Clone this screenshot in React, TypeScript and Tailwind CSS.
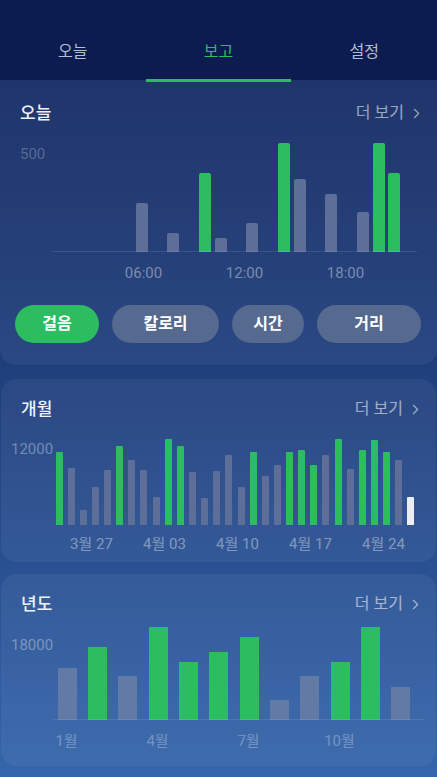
import { ChevronRight } from "lucide-react"

const font = { fontFamily: "Roboto, 'Noto Sans CJK KR', sans-serif" }

const GREEN = "bg-[#2bbd5f]"
const GRAY = "bg-[#5d6f98]"

// hour -> [height, green]
const today: Record<number, [number, boolean]> = {
    6: [49, false],
    8: [19, false],
    10: [79, true],
    11: [14, false],
    13: [29, false],
    15: [109, true],
    16: [73, false],
    18: [58, false],
    20: [40, false],
    21: [109, true],
    22: [79, true],
}

const month: [number, "g" | "x" | "w"][] = [
    [73, "g"], [57, "x"], [15, "x"], [38, "x"], [55, "x"], [79, "g"], [65, "x"], [55, "x"], [28, "x"], [86, "g"],
    [79, "g"], [53, "x"], [27, "x"], [54, "x"], [70, "x"], [38, "x"], [73, "g"], [49, "x"], [60, "x"], [73, "g"],
    [75, "g"], [60, "g"], [70, "x"], [86, "g"], [56, "x"], [75, "g"], [85, "g"], [73, "g"], [65, "x"], [28, "w"],
]

const year: [number, boolean][] = [
    [52, false], [73, true], [44, false], [93, true], [58, true], [68, true],
    [83, true], [20, false], [44, false], [58, true], [93, true], [33, false],
]

function CardHeader({ title }: { title: string }) {
    return (
        <div className="flex items-center justify-between pl-5 pr-3">
            <p className="text-[17px] leading-6 font-medium text-[#eef1f8]">{title}</p>
            <button className="flex items-center gap-1 text-[16px] leading-6 text-white/55">
                더 보기
                <ChevronRight size={17} strokeWidth={1.6} />
            </button>
        </div>
    )
}

export default function App() {
    return (
        <div style={font} className="w-full min-h-[777px] bg-linear-to-b from-[#10245c] via-[#20407e] to-[#3565ab] pb-3">
            {/* tabs */}
            <div className="h-20 bg-[#0c1c50] pt-10 grid grid-cols-3">
                {["오늘", "보고", "설정"].map((t, i) => (
                    <div key={t} className="relative h-10 text-center">
                        <p className={`text-[16px] leading-6 ${i === 1 ? "text-[#2bbd5f]" : "text-[#b6bed1]"}`}>{t}</p>
                        {i === 1 && <div className="absolute left-0 right-0 -bottom-[2px] h-[3px] bg-[#2bbd5f]" />}
                    </div>
                ))}
            </div>

            {/* today */}
            <div className="bg-white/[0.05] rounded-b-2xl pt-[21px] pb-[22px]">
                <CardHeader title="오늘" />
                <div className="relative mt-[18px] h-[109px]">
                    <span className="absolute left-5 top-[3px] text-[15px] leading-4 text-white/25">500</span>
                    <div className="absolute left-[53px] right-5 bottom-0 h-px bg-white/10" />
                    <div className="ml-[39px] w-[379px] h-full grid grid-cols-24 items-end">
                        {Array.from({ length: 24 }).map((_, h) => (
                            <div key={h} className="flex justify-center">
                                {today[h] && (
                                    <div
                                        className={`w-3 rounded-t-[2px] ${today[h][1] ? GREEN : GRAY}`}
                                        style={{ height: today[h][0] }}
                                    />
                                )}
                            </div>
                        ))}
                    </div>
                </div>
                <div className="mt-[13px] ml-[93px] flex text-[15px] leading-4 text-white/40">
                    {["06:00", "12:00", "18:00"].map(l => (
                        <span key={l} className="w-[101px] text-center">{l}</span>
                    ))}
                </div>
                <div className="mt-6 px-[15px] flex gap-[13px] text-[16px] font-bold text-white">
                    <button className="w-[84px] h-[38px] rounded-full bg-[#2bbd5f]">걸음</button>
                    <button className="w-[107px] h-[38px] rounded-full bg-[#56698f]">칼로리</button>
                    <button className="w-[72px] h-[38px] rounded-full bg-[#56698f]">시간</button>
                    <button className="w-[104px] h-[38px] rounded-full bg-[#56698f]">거리</button>
                </div>
            </div>

            {/* month */}
            <div className="mx-px mt-[14px] rounded-2xl bg-white/[0.05] pt-[18px] pb-[10px]">
                <CardHeader title="개월" />
                <div className="relative mt-[18px] h-[86px]">
                    <span className="absolute left-[10px] top-[2px] text-[15px] leading-4 text-white/35">12000</span>
                    <div className="ml-[52px] w-[364px] h-full grid grid-cols-30 items-end">
                        {month.map(([v, c], i) => (
                            <div key={i} className="flex justify-center">
                                <div
                                    className={`w-[7px] rounded-t-[1px] ${c === "g" ? GREEN : c === "w" ? "bg-[#eceef3]" : GRAY}`}
                                    style={{ height: v }}
                                />
                            </div>
                        ))}
                    </div>
                </div>
                <div className="mt-[11px] ml-[54px] flex text-[15px] leading-4 text-white/40">
                    {["3월 27", "4월 03", "4월 10", "4월 17", "4월 24"].map(l => (
                        <span key={l} className="w-[73px] text-center">{l}</span>
                    ))}
                </div>
            </div>

            {/* year */}
            <div className="mx-px mt-3 rounded-2xl bg-white/[0.05] pt-[18px] pb-[17px]">
                <CardHeader title="년도" />
                <div className="relative mt-[11px] h-[93px]">
                    <span className="absolute left-[10px] top-[10px] text-[15px] leading-4 text-white/35">18000</span>
                    <div className="absolute left-[52px] right-[11px] bottom-0 h-px bg-white/10" />
                    <div className="ml-[51px] w-[364px] h-full grid grid-cols-12 items-end">
                        {year.map(([v, g], i) => (
                            <div key={i} className="flex justify-center">
                                <div
                                    className={`w-[19px] ${g ? GREEN : "bg-[#6379a6]"}`}
                                    style={{ height: v }}
                                />
                            </div>
                        ))}
                    </div>
                </div>
                <div className="mt-[13px] ml-[20px] flex text-[15px] leading-4 text-white/30">
                    {["1월", "4월", "7월", "10월"].map(l => (
                        <span key={l} className="w-[91px] text-center">{l}</span>
                    ))}
                </div>
            </div>
        </div>
    )
}
